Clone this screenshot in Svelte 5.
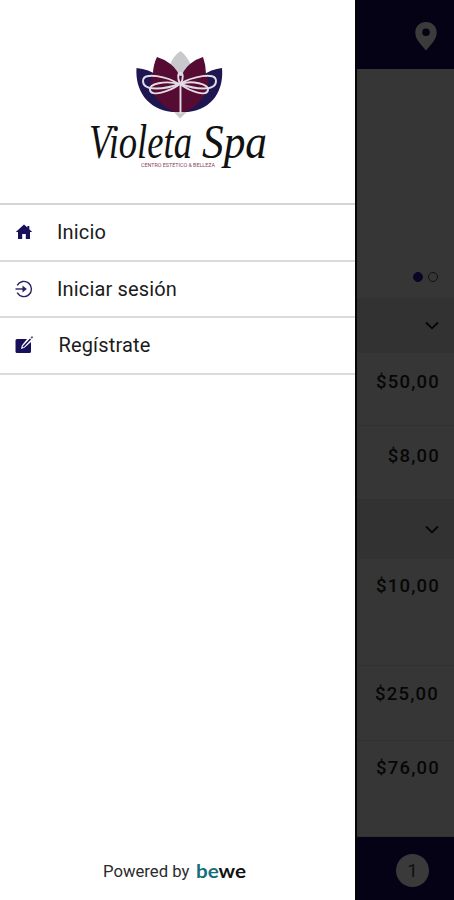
<script>
  const menu = [
    { icon: 'home', label: 'Inicio' },
    { icon: 'login', label: 'Iniciar sesión' },
    { icon: 'edit', label: 'Regístrate' }
  ];
  const groups = [
    { head: 55, items: [{ price: '$50,00', h: 73, pad: 18 }, { price: '$8,00', h: 74, pad: 19 }] },
    { head: 59, items: [{ price: '$10,00', h: 107, pad: 16 }, { price: '$25,00', h: 75, pad: 17, shift: true }, { price: '$76,00', h: 96, pad: 16 }] }
  ];
</script>

<div class="app">
  <aside>
    <div class="brand">
      <svg width="200" height="135" viewBox="80 40 200 135" role="img" aria-label="Violeta Spa">
        <path d="M180.500 51Q173 56 170 65L174 112L180 118.500L187 112L191 65Q187 56 180.500 51Z" fill="#c9c8cc" />
        <path d="M136.500 68C135 90 147 109 172 112L188 112C213 109 224 90 222 68Q211 69 202 76L158 76Q149 69 136.500 68Z" fill="#1d1650" />
        <path d="M157 57Q164 59 170.500 64Q178 70 180.500 79Q183 70 190 64Q196 59 203 57Q206 65 206 74Q211 83 206 92Q200 105 186 112L174 112Q159 105 153 92Q149 83 153 74Q153 65 157 57Z" fill="#560b32" />
        <g fill="none" stroke="#e4dce5" stroke-width="1.900">
          <path d="M179 84C168 77 143 71 143 81C143 92 166 89 179 84C192 77 216 71 216 81C216 92 194 89 181 84" />
          <path d="M180 84C164 80 149 84 150 90C151 97 169 92 180 84C192 80 209 84 208 90C207 97 191 92 180 84" />
          <path d="M180 84C177 77 178 73 180.500 73C183 73 184 78 180.500 84V114" />
        </g>
        <text class="script" x="89" y="158" textLength="103" lengthAdjust="spacingAndGlyphs">Violeta</text>
        <text class="script" x="202" y="158" textLength="65" lengthAdjust="spacingAndGlyphs">Spa</text>
        <text class="tag" x="141" y="166.500" textLength="74" lengthAdjust="spacingAndGlyphs">CENTRO ESTÉTICO &amp; BELLEZA</text>
      </svg>
    </div>
    <nav>
      {#each menu as item}
        <div class="item">
          <svg width="18" height="18" viewBox="0 0 18 18">
            {#if item.icon === 'home'}
              <path d="M9 1.500L.800 9H3V16H7.200V11H10.800V16H15V9H17.200L14.300 6.300V3H12.400V4.600Z" fill="#19105c" />
            {:else if item.icon === 'login'}
              <path d="M2.200 5.300A7.600 7.600 0 1 1 2.200 12.700" fill="none" stroke="#292163" stroke-width="1.400" />
              <path d="M.500 9H9" stroke="#292163" stroke-width="1.400" />
              <path d="M7.500 5.500L11.800 9L7.500 12.500Z" fill="#292163" />
            {:else}
              <path d="M2 3H12L6.800 9.500L6 13L9.500 11.800L16 6V15.500Q16 17 14.500 17H2Q.500 17 .500 15.500V4.500Q.500 3 2 3Z" fill="#19105c" />
              <path d="M8 11L15.500 3" stroke="#19105c" stroke-width="1.500" />
              <path d="M16.200 2.200L17.600 .700" stroke="#5a5486" stroke-width="1.700" />
            {/if}
          </svg>
          <span class:wide={item.icon === 'edit'}>{item.label}</span>
        </div>
      {/each}
    </nav>
    <footer>
      <span>Powered by</span>
      <svg width="54" height="28" viewBox="0 0 54 28" role="img" aria-label="bewe">
        <text x="1" y="20" textLength="50" lengthAdjust="spacingAndGlyphs"><tspan fill="#176f7b">be</tspan><tspan fill="#111">we</tspan></text>
      </svg>
    </footer>
  </aside>

  <main>
    <header>
      <svg width="22" height="29" viewBox="0 0 22 29">
        <path fill-rule="evenodd" d="M11 0C4.800 0 .300 4.500 .300 10.400C.300 17.500 6 22 11 28.500C16 22 21.700 17.500 21.700 10.400C21.700 4.500 17.200 0 11 0ZM11 6.500A3.800 3.800 0 1 1 11 14.100A3.800 3.800 0 1 1 11 6.500Z" fill="#3b3b3b" />
      </svg>
    </header>
    <div class="hero"><i class="on"></i><i></i></div>
    {#each groups as group}
      <div class="head" style="height: {group.head}px">
        <svg width="14" height="9" viewBox="0 0 14 9"><path d="M1 1.500L7 7.300L13 1.500" fill="none" stroke="#050505" stroke-width="1.800" /></svg>
      </div>
      {#each group.items as item}
        <div class="row" class:shift={item.shift} style="height: {item.h}px; padding-top: {item.pad}px">{item.price}</div>
      {/each}
    {/each}
    <div class="cart"><b>1</b></div>
  </main>
</div>

<style>
  :global(body) { margin: 0; }
  .app { display: flex; width: 454px; height: 900px; overflow: hidden; font-family: Roboto, "Liberation Sans", sans-serif; }
  aside { box-sizing: border-box; width: 355px; flex: none; display: flex; flex-direction: column; background: #fff; }
  .brand { box-sizing: border-box; height: 205px; flex: none; padding: 40px 0 0 80px; border-bottom: 2px solid #d5d5d5; }
  .brand svg { display: block; }
  .script { font: italic 49px "Liberation Serif", serif; fill: #111; }
  .tag { font: 6px Roboto, sans-serif; fill: #8b4162; }
  .item { box-sizing: border-box; height: 56.6px; display: flex; align-items: center; padding-left: 15px; gap: 27px; border-bottom: 2px solid #dbdbdb; color: #1b1b1b; font-size: 20px; letter-spacing: .15px; }
  .item svg { flex: none; }
  .item span { margin-left: -3px; }
  .item .wide { margin-left: -1.5px; }
  footer { margin-top: auto; height: 57px; display: flex; align-items: center; padding-left: 103px; gap: 6px; font-size: 16.700px; color: #2b2b2b; }
  footer svg { font: bold 19px Lato, sans-serif; }
  main { flex: 1; box-sizing: border-box; border-left: 2px solid #050505; display: flex; flex-direction: column; background: #363636; }
  header { box-sizing: border-box; height: 69px; flex: none; background: #060216; display: flex; justify-content: flex-end; padding: 22px 17px 0 0; }
  .hero { box-sizing: border-box; height: 229px; flex: none; display: flex; justify-content: flex-end; align-items: flex-end; gap: 5px; padding: 0 16px 16px 0; }
  i { box-sizing: border-box; width: 10px; height: 10px; border: 1.5px solid #111; border-radius: 50%; }
  .on { background: #0a0524; border-color: #0a0524; }
  .head { box-sizing: border-box; flex: none; background: #323232; display: flex; align-items: center; justify-content: flex-end; padding-right: 15px; }
  .row { box-sizing: border-box; flex: none; border-bottom: 1px solid #313131; padding-right: 14px; text-align: right; font-size: 18.500px; line-height: 22px; font-weight: 500; letter-spacing: 1.2px; color: #070707; }
  .row.shift { padding-right: 15px; }
  .cart { box-sizing: border-box; height: 63px; flex: none; background: #060216; display: flex; align-items: center; justify-content: flex-end; padding: 3px 25px 0 0; }
  b { width: 33px; height: 33px; border-radius: 50%; background: #3a3a3a; color: #111; font-size: 19px; font-weight: 400; line-height: 33px; text-align: center; }
</style>
